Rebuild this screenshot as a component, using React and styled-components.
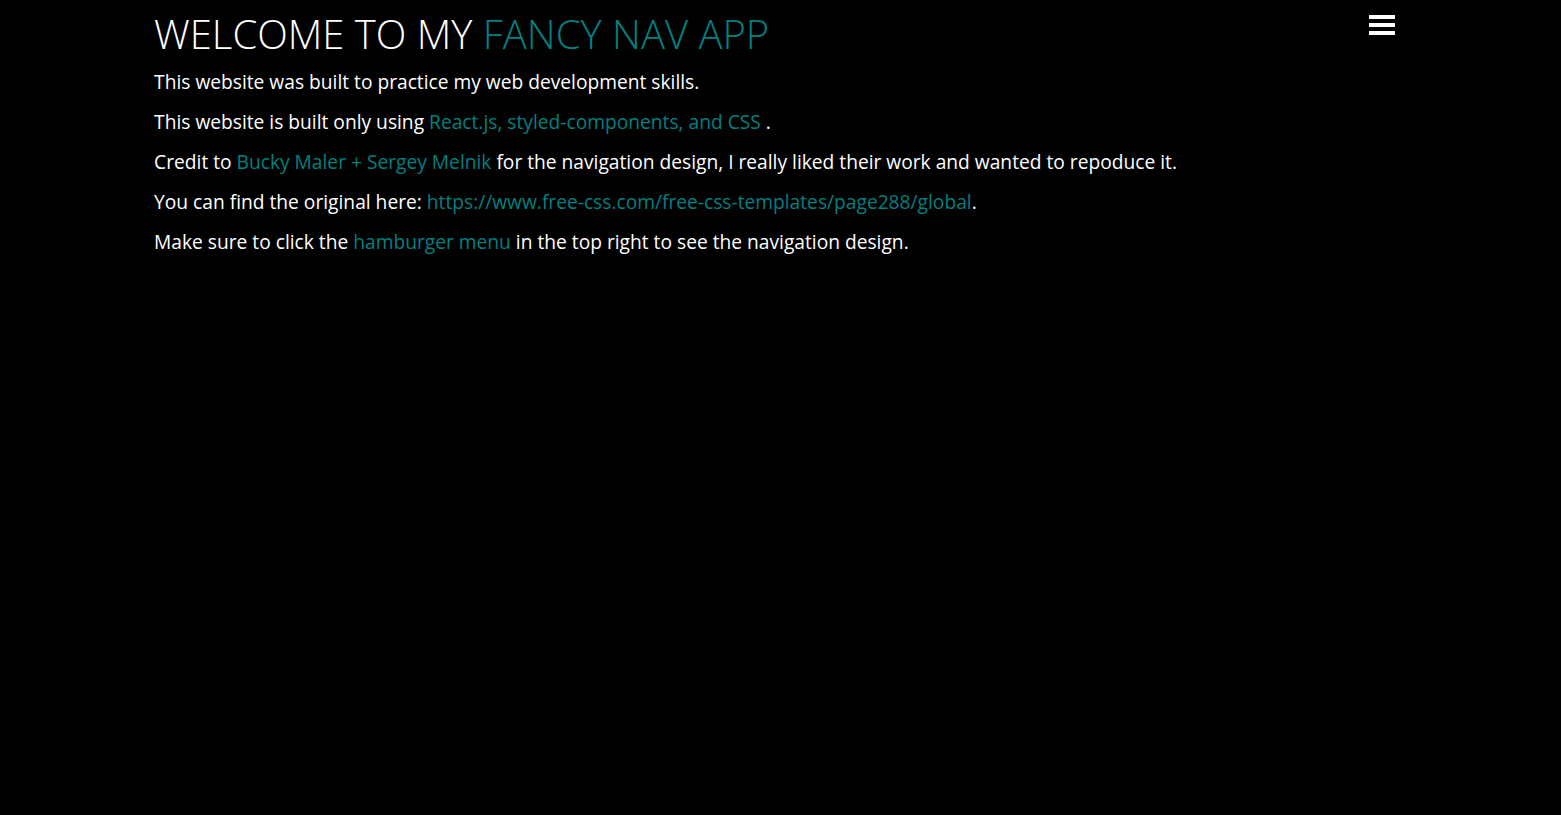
import React from "react";
import styled, { createGlobalStyle } from "styled-components";

const Global = createGlobalStyle`
  html, body { margin: 0; padding: 0; background: #000; }
  body { font-family: "Open Sans", "Liberation Sans", sans-serif; color: #fff; min-height: 815px; }
`;

const Page = styled.div`
  width: calc(80% + 4px);
  margin: 0 auto;
  display: flex;
  align-items: flex-start;
  justify-content: space-between;
  padding-top: 9px;
`;

const Main = styled.main`
  display: flex;
  flex-direction: column;
`;

const Title = styled.h1`
  margin: 0 0 3px;
  font-size: 40px;
  font-weight: 300;
  line-height: 50px;
`;

const Accent = styled.span`
  color: #008080;
`;

const Para = styled.p`
  margin: 0;
  font-size: 19.2px;
  line-height: 40px;
`;

const Burger = styled.button`
  display: flex;
  flex-direction: column;
  gap: 4px;
  background: none;
  border: 0;
  padding: 0;
  margin: 6px 12px 0 0;
  cursor: pointer;
`;

const Bar = styled.span`
  display: block;
  width: 26px;
  height: 4px;
  background: #fff;
`;

export default function App() {
  return (
    <>
      <Global />
      <Page>
        <Main>
          <Title>
            WELCOME TO MY <Accent>FANCY NAV APP</Accent>
          </Title>
          <Para>This website was built to practice my web development skills.</Para>
          <Para>
            This website is built only using <Accent>React.js, styled-components, and CSS</Accent> .
          </Para>
          <Para>
            Credit to <Accent>Bucky Maler + Sergey Melnik</Accent> for the navigation design, I really liked their work and wanted to repoduce it.
          </Para>
          <Para>
            You can find the original here: <Accent>https://www.free-css.com/free-css-templates/page288/global</Accent>.
          </Para>
          <Para>
            Make sure to click the <Accent>hamburger menu</Accent> in the top right to see the navigation design.
          </Para>
        </Main>
        <Burger aria-label="menu">
          <Bar />
          <Bar />
          <Bar />
        </Burger>
      </Page>
    </>
  );
}
